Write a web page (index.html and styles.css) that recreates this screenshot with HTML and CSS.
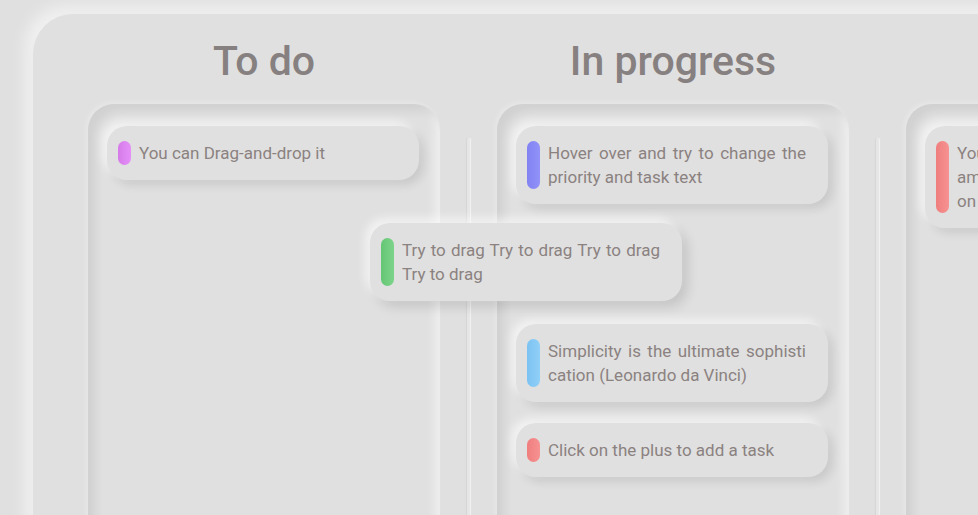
FILE: index.html
```html
<!DOCTYPE html>
<html lang="en">
<head>
<meta charset="utf-8">
<title>Kanban</title>
<link rel="stylesheet" href="styles.css">
</head>
<body>
<div class="board">
  <section class="column">
    <h2 class="col-title">To do</h2>
    <div class="panel">
      <div class="card">
        <span class="bar bar-purple"></span>
        <p class="card-text">You can Drag-and-drop it</p>
      </div>
    </div>
  </section>
  <div class="divider"></div>
  <section class="column">
    <h2 class="col-title">In progress</h2>
    <div class="panel">
      <div class="card">
        <span class="bar bar-indigo"></span>
        <p class="card-text">Hover over and try to change the priority and task text</p>
      </div>
      <div class="placeholder"></div>
      <div class="card">
        <span class="bar bar-blue"></span>
        <p class="card-text">Simplicity is the ultimate sophistication (Leonardo da Vinci)</p>
      </div>
      <div class="card">
        <span class="bar bar-red"></span>
        <p class="card-text">Click on the plus to add a task</p>
      </div>
    </div>
  </section>
  <div class="divider"></div>
  <section class="column">
    <h2 class="col-title">Done</h2>
    <div class="panel">
      <div class="card">
        <span class="bar bar-red"></span>
        <p class="card-text left">You can delete a task<br>among the others<br>on any column</p>
      </div>
    </div>
  </section>
  <div class="card ghost">
    <span class="bar bar-green"></span>
    <p class="card-text">Try to drag Try to drag Try to drag Try to drag</p>
  </div>
</div>
</body>
</html>
```
FILE: styles.css
```css
html, body {
  margin: 0;
  padding: 0;
  overflow: hidden;
  background: #e0e0e0;
  height: 100%;
}

body {
  font-family: Roboto, "Liberation Sans", sans-serif;
  color: #8b8280;
}

.board {
  position: relative;
  display: flex;
  align-items: stretch;
  width: 1400px;
  height: 620px;
  margin: 14px 0 0 33px;
  padding: 23px 0 0 55px;
  box-sizing: border-box;
  background: #e0e0e0;
  border-radius: 40px 0 0 0;
  box-shadow: -8px -8px 16px rgba(255, 255, 255, 0.55),
              8px 8px 16px rgba(0, 0, 0, 0.08);
}

.column {
  width: 352px;
  flex-shrink: 0;
  display: flex;
  flex-direction: column;
}

.col-title {
  margin: 0 0 19px;
  font-size: 41px;
  line-height: 48px;
  font-weight: 500;
  text-align: center;
  color: #878080;
}

.panel {
  flex: 1;
  display: flex;
  flex-direction: column;
  gap: 21px;
  padding: 22px 21px 22px 19px;
  border-radius: 26px;
  background: #e0e0e0;
  box-shadow: inset 7px 7px 10px rgba(0, 0, 0, 0.07),
              inset -6px -6px 10px rgba(255, 255, 255, 0.45),
              -2px -2px 5px rgba(255, 255, 255, 0.25);
}

.divider {
  width: 3px;
  flex-shrink: 0;
  margin: 101px 27px 0 27px;
  border-radius: 2px 2px 0 0;
  background: #e6e6e6;
  box-shadow: -1px 0 1px rgba(0, 0, 0, 0.05), 1px 0 1px rgba(255, 255, 255, 0.6);
}

.card {
  display: flex;
  gap: 8px;
  width: 312px;
  box-sizing: border-box;
  padding: 15px 22px 15px 11px;
  border-radius: 20px;
  background: #e0e0e0;
  box-shadow: -5px -5px 10px rgba(255, 255, 255, 0.6),
              5px 5px 10px rgba(0, 0, 0, 0.1);
}

.placeholder {
  height: 78px;
  flex-shrink: 0;
}

.bar {
  width: 13px;
  flex-shrink: 0;
  border-radius: 7px;
  filter: blur(0.4px);
}

.bar-purple { background: linear-gradient(90deg, #d57be9, #e58ff8); }
.bar-indigo { background: linear-gradient(90deg, #8282f2, #9292fa); }
.bar-green  { background: linear-gradient(90deg, #64c674, #7dd48b); }
.bar-blue   { background: linear-gradient(90deg, #7cc2f2, #90d0f8); }
.bar-red    { background: linear-gradient(90deg, #ef7e7e, #f79292); }

.card-text {
  flex: 1;
  margin: 0;
  font-size: 17px;
  line-height: 24px;
  text-align: justify;
  word-break: break-all;
  color: #8b8280;
}

.card-text.left {
  text-align: left;
  white-space: nowrap;
}

.ghost {
  position: absolute;
  left: 337px;
  top: 209px;
  box-shadow: -5px -5px 10px rgba(255, 255, 255, 0.6),
              6px 6px 12px rgba(0, 0, 0, 0.12);
}
```
